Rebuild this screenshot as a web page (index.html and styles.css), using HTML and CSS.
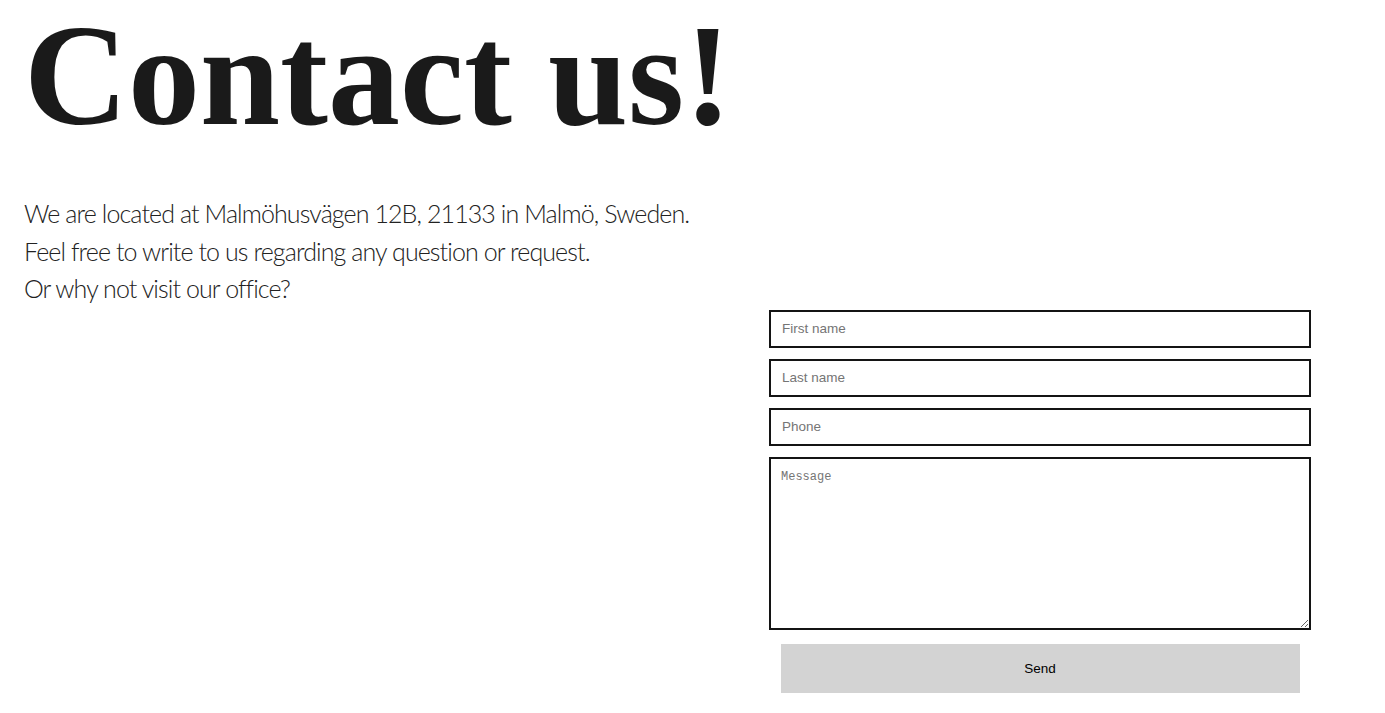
FILE: index.html
```html
<!DOCTYPE html>
<html lang="en">
<head>
<meta charset="utf-8">
<title>Contact us!</title>
<link rel="stylesheet" href="styles.css">
</head>
<body>
<main class="page">
  <section class="intro">
    <h1 class="title">Contact us!</h1>
    <p class="info">We are located at Malmöhusvägen 12B, 21133 in Malmö, Sweden.<br>Feel free to write to us regarding any question or request.<br>Or why not visit our office?</p>
  </section>
  <form class="contact-form">
    <input class="field" type="text" placeholder="First name">
    <input class="field" type="text" placeholder="Last name">
    <input class="field" type="text" placeholder="Phone">
    <textarea class="field message" placeholder="Message"></textarea>
    <button class="send" type="button">Send</button>
  </form>
</main>
</body>
</html>
```
FILE: styles.css
```css
html, body {
  margin: 0;
  padding: 0;
  background: #ffffff;
}

.page {
  display: flex;
  flex-direction: column;
  padding: 0 0 0 24px;
}

.intro {
  display: flex;
  flex-direction: column;
}

.title {
  margin: -4px 0 0 0;
  font-family: "Liberation Serif", "Times New Roman", serif;
  font-weight: 700;
  font-size: 144px;
  line-height: 160px;
  color: #1a1a1a;
}

.info {
  margin: 39px 0 0 0;
  font-family: "Lato", sans-serif;
  font-weight: 300;
  font-size: 25px;
  line-height: 37.5px;
  letter-spacing: -0.9px;
  color: #222222;
}

.contact-form {
  align-self: flex-end;
  width: 542px;
  margin: 2px 74px 0 0;
  display: flex;
  flex-direction: column;
  align-items: center;
  gap: 11px;
}

.field {
  box-sizing: border-box;
  width: 100%;
  height: 38px;
  margin: 0;
  padding: 0 11px;
  border: 2px solid #141414;
  border-radius: 0;
  background: #ffffff;
  font-family: "Liberation Sans", Arial, sans-serif;
  font-size: 13.5px;
  color: #111111;
  outline: none;
}

.field::placeholder {
  color: #757575;
}

.message {
  height: 173px;
  padding: 11px 10px;
  font-family: "Liberation Mono", "DejaVu Sans Mono", monospace;
  font-size: 12px;
  resize: both;
}

.send {
  width: 519px;
  height: 49px;
  margin-top: 3px;
  border: none;
  background: #d3d3d3;
  font-family: "Liberation Sans", Arial, sans-serif;
  font-size: 13.5px;
  color: #000000;
  cursor: pointer;
}
```
